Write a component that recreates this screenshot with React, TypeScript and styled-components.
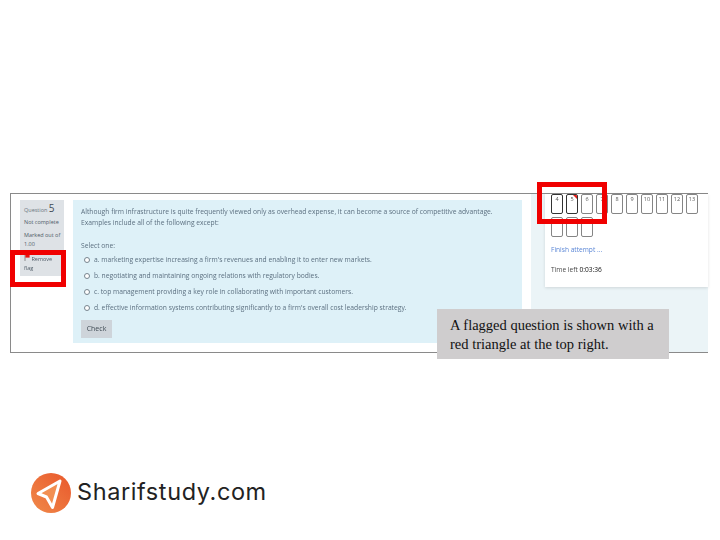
import React from 'react'
import styled, { createGlobalStyle } from 'styled-components'

const navRows = [4, 5, 6, 7, 8, 9, 10, 11, 12, 13, 14, 15, 16]

const options = [
  "a. marketing expertise increasing a firm's revenues and enabling it to enter new markets.",
  'b. negotiating and maintaining ongoing relations with regulatory bodies.',
  'c. top management providing a key role in collaborating with important customers.',
  "d. effective information systems contributing significantly to a firm's overall cost leadership strategy.",
]

const App: React.FC = () => {
  return (
    <Slide>
      <GlobalStyle />
      <Frame>
        <InfoColumn>
          <InfoPanel>
            <QuestionNo>Question <b>5</b></QuestionNo>
            <InfoLine>Not complete</InfoLine>
            <Marked>Marked out of 1.00</Marked>
            <FlagLine>
              <svg width="6" height="7" viewBox="0 0 6 7">
                <path d="M1 0V7" stroke="#777" strokeWidth="0.8" />
                <path d="M1.4 0.3H5.6V3.6H1.4Z" fill="#e8130f" />
              </svg>
              {' '}Remove flag
            </FlagLine>
          </InfoPanel>
        </InfoColumn>
        <Content>
          <QuestionText>
            Although firm infrastructure is quite frequently viewed only as overhead expense, it can become a source of
            competitive advantage. Examples include all of the following except:
          </QuestionText>
          <SelectOne>Select one:</SelectOne>
          {options.map((o) => (
            <Option key={o}>
              <Radio />
              {o}
            </Option>
          ))}
          <CheckButton>Check</CheckButton>
        </Content>
        <Side>
          <Card>
            <NavGrid>
              {navRows.map((n) => (
                <NavButton key={n} $current={n === 4 || n === 5} $flagged={n === 5}>
                  {n}
                </NavButton>
              ))}
            </NavGrid>
            <FinishLink>Finish attempt ...</FinishLink>
            <TimeLeft>Time left <b>0:03:36</b></TimeLeft>
          </Card>
        </Side>
      </Frame>
      <Brand>
        <svg width="40" height="40" viewBox="0 0 40 40">
          <defs>
            <linearGradient id="disc" x1="0" y1="1" x2="1" y2="0">
              <stop offset="0" stopColor="#f08a4a" />
              <stop offset="1" stopColor="#e9572b" />
            </linearGradient>
          </defs>
          <circle cx="20" cy="20" r="20" fill="url(#disc)" />
          <path d="M29 8L7 20.5L15.5 24L21.5 34.5Z" fill="#f28f52" stroke="#fff" strokeWidth="3" strokeLinejoin="round" />
        </svg>
        <BrandName>Sharifstudy.com</BrandName>
      </Brand>
      <RedBox $x={10} $y={250} $w={56} $h={37} />
      <RedBox $x={537} $y={182} $w={70} $h={42} />
      <Callout>A flagged question is shown with a red triangle at the top right.</Callout>
    </Slide>
  )
}

const GlobalStyle = createGlobalStyle`
  html, body {
    margin: 0;
    padding: 0;
    background: white;
  }
`

const Slide = styled.div`
  position: relative;
  width: 720px;
  height: 540px;
  overflow: hidden;
  background: white;
  padding-top: 193px;
  box-sizing: border-box;
  font-family: "Open Sans", sans-serif;
`

const Frame = styled.div`
  display: flex;
  box-sizing: border-box;
  width: 698px;
  height: 160px;
  margin-left: 10px;
  border: 1px solid #8a8a8a;
  border-right: none;
  filter: blur(0.35px);
`

const InfoColumn = styled.div`
  width: 62px;
  padding: 6px 0 0 9px;
  box-sizing: border-box;
`

const InfoPanel = styled.div`
  width: 44px;
  height: 76px;
  box-sizing: border-box;
  padding: 4px 1px 4px 4px;
  background: #dee2e6;
  color: #4f5b66;
  font-size: 5.5px;
  line-height: 9px;
`

const QuestionNo = styled.div`
  height: 14px;
  color: #6b7680;
  b {
    font-size: 10px;
    font-weight: 400;
    color: #3f4a54;
  }
`

const InfoLine = styled.div`
  margin-bottom: 4px;
`

const Marked = styled.div`
  margin-bottom: 5px;
`

const FlagLine = styled.div`
  width: 30px;
  white-space: pre-wrap;
`

const Content = styled.div`
  width: 449px;
  height: 143px;
  margin-top: 6px;
  box-sizing: border-box;
  padding: 6px 8px;
  background: #def1f8;
  color: #5c7080;
  font-size: 6.73px;
`

const QuestionText = styled.div`
  line-height: 11.4px;
  width: 425px;
`

const SelectOne = styled.div`
  margin-top: 11px;
  line-height: 11px;
  margin-bottom: 1px;
`

const Option = styled.div`
  display: flex;
  align-items: center;
  height: 16px;
  padding-left: 3px;
  white-space: nowrap;
`

const Radio = styled.span`
  width: 6px;
  height: 6px;
  margin-right: 4px;
  border: 1px solid #77858f;
  border-radius: 50%;
  background: white;
  box-sizing: border-box;
`

const CheckButton = styled.div`
  display: flex;
  align-items: center;
  justify-content: center;
  width: 31px;
  height: 18px;
  margin-top: 4px;
  background: #ced4da;
  color: #3f4a54;
  font-size: 7px;
`

const Side = styled.div`
  flex: 1;
  margin-left: 9px;
  padding-left: 14px;
  background: #ebf4f7;
`

const Card = styled.div`
  height: 93px;
  padding-left: 6px;
  background: white;
  box-shadow: 0 1px 3px rgba(0, 0, 0, 0.12);
`

const NavGrid = styled.div`
  display: flex;
  flex-wrap: wrap;
  gap: 3px;
  width: 150px;
`

const NavButton = styled.div<{ $current?: boolean; $flagged?: boolean }>`
  position: relative;
  width: 12px;
  height: 20px;
  box-sizing: border-box;
  border: 1px solid ${(p) => (p.$current ? '#333' : '#858585')};
  border-radius: 2px;
  color: #555;
  font-size: 5.5px;
  line-height: 9px;
  text-align: center;
  overflow: hidden;

  &::after {
    content: '';
    display: ${(p) => (p.$flagged ? 'block' : 'none')};
    position: absolute;
    top: 0;
    right: 0;
    border-top: 4px solid #e0201c;
    border-left: 4px solid transparent;
  }
`

const FinishLink = styled.div`
  margin-top: 8px;
  color: #5a86d6;
  font-size: 6.6px;
  line-height: 9px;
`

const TimeLeft = styled.div`
  margin-top: 11px;
  color: #4a4a4a;
  font-size: 6.6px;
  line-height: 9px;
  b {
    font-weight: 400;
    color: #111;
  }
`

const Brand = styled.div`
  display: flex;
  align-items: center;
  gap: 7px;
  margin: 120px 0 0 31px;
`

const BrandName = styled.div`
  margin: 0 0 4px -1px;
  color: #222;
  font-family: Inter, sans-serif;
  font-size: 23.5px;
  letter-spacing: 0.6px;
`

const RedBox = styled.div<{ $x: number; $y: number; $w: number; $h: number }>`
  position: absolute;
  left: ${(p) => p.$x}px;
  top: ${(p) => p.$y}px;
  width: ${(p) => p.$w}px;
  height: ${(p) => p.$h}px;
  box-sizing: border-box;
  border: 5px solid #f00000;
`

const Callout = styled.div`
  position: absolute;
  left: 437px;
  top: 309px;
  width: 232px;
  height: 50px;
  box-sizing: border-box;
  padding: 7px 13px;
  background: #cfcdce;
  color: #111;
  font-family: "Liberation Serif", serif;
  font-size: 14.5px;
  line-height: 18.5px;
`

export default App
